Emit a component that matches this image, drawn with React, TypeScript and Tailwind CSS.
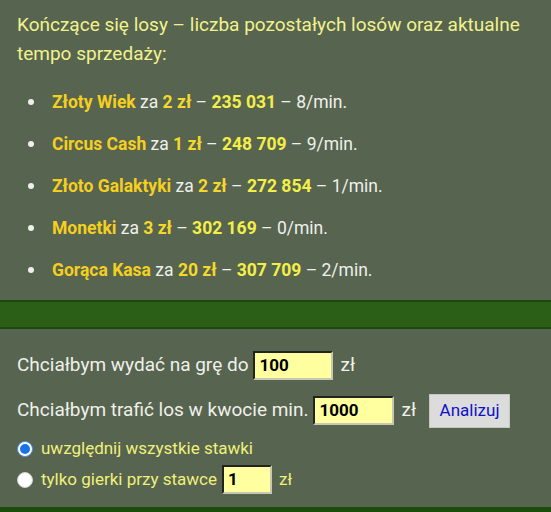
const items = [
  { name: 'Złoty Wiek', price: '2 zł', left: '235 031', rate: '8/min.' },
  { name: 'Circus Cash', price: '1 zł', left: '248 709', rate: '9/min.' },
  { name: 'Złoto Galaktyki', price: '2 zł', left: '272 854', rate: '1/min.' },
  { name: 'Monetki', price: '3 zł', left: '302 169', rate: '0/min.' },
  { name: 'Gorąca Kasa', price: '20 zł', left: '307 709', rate: '2/min.' },
];

const Field = ({ value, width }: { value: string; width: string }) => (
  <span
    className={`${width} h-[29px] flex items-center pl-[4px] bg-[#ffffa0] border-2 border-t-[#222] border-l-[#222] border-b-[#c8c8b0] border-r-[#c8c8b0] text-black font-bold text-[17px]`}
  >
    {value}
  </span>
);

const Radio = ({ checked }: { checked?: boolean }) =>
  checked ? (
    <span className="w-[16px] h-[16px] rounded-full bg-white border border-[#4a8ff0] flex items-center justify-center">
      <span className="w-[10px] h-[10px] rounded-full bg-[#1a73e8]" />
    </span>
  ) : (
    <span className="w-[16px] h-[16px] rounded-full bg-white border border-[#d0d0d0]" />
  );

export default function App() {
  return (
    <div
      className="w-[551px] h-[512px] bg-[#566450] flex flex-col overflow-hidden"
      style={{ fontFamily: 'Roboto, "Noto Sans", sans-serif' }}
    >
      <div className="px-[17px] pt-[10px]">
        <p className="text-[19px] leading-[29px] text-[#f2f28c]">
          Kończące się losy – liczba pozostałych losów oraz aktualne tempo sprzedaży:
        </p>
        <ul className="mt-[13px]">
          {items.map((it) => (
            <li key={it.name} className="h-[42px] flex items-center text-[17.5px] text-[#f0f0ea]">
              <span className="w-[35px] pl-[11px]">
                <span className="block w-[6px] h-[6px] rounded-full bg-[#f0f0ea]" />
              </span>
              <span>
                <b className="text-[#f5cf1f]">{it.name}</b> za{' '}
                <b className="text-[#f5d82a]">{it.price}</b> –{' '}
                <b className="text-[#f4ef48]">{it.left}</b> – {it.rate}
              </span>
            </li>
          ))}
        </ul>
      </div>

      <div className="mt-[9px] h-[29px] border-y-2 border-[#1b4a0b] bg-[#2b5e17]" />

      <div className="px-[17px] pt-[14px] text-[19px] text-[#f0f0ea] flex-1">
        <div className="h-[45px] flex items-center">
          <span>Chciałbym wydać na grę do</span>
          <span className="ml-[5px]">
            <Field value="100" width="w-[80px]" />
          </span>
          <span className="ml-[7px]">zł</span>
        </div>
        <div className="h-[45px] flex items-center">
          <span>Chciałbym trafić los w kwocie min.</span>
          <span className="ml-[5px]">
            <Field value="1000" width="w-[81px]" />
          </span>
          <span className="ml-[7px]">zł</span>
          <span className="ml-[13px] w-[81px] h-[34px] flex items-center justify-center bg-[#dcdcdc] border border-[#c4c8c0] text-[#1010c8] text-[17px]">
            Analizuj
          </span>
        </div>
        <div className="h-[31px] flex items-center text-[17px] text-[#f0f07a]">
          <Radio checked />
          <span className="ml-[8px]">uwzględnij wszystkie stawki</span>
        </div>
        <div className="h-[31px] flex items-center text-[17px] text-[#f0f07a]">
          <Radio />
          <span className="ml-[8px]">tylko gierki przy stawce</span>
          <span className="ml-[5px]">
            <Field value="1" width="w-[50px]" />
          </span>
          <span className="ml-[7px]">zł</span>
        </div>
      </div>

      <div className="h-[5px] bg-[#1d4d0b]" />
    </div>
  );
}
